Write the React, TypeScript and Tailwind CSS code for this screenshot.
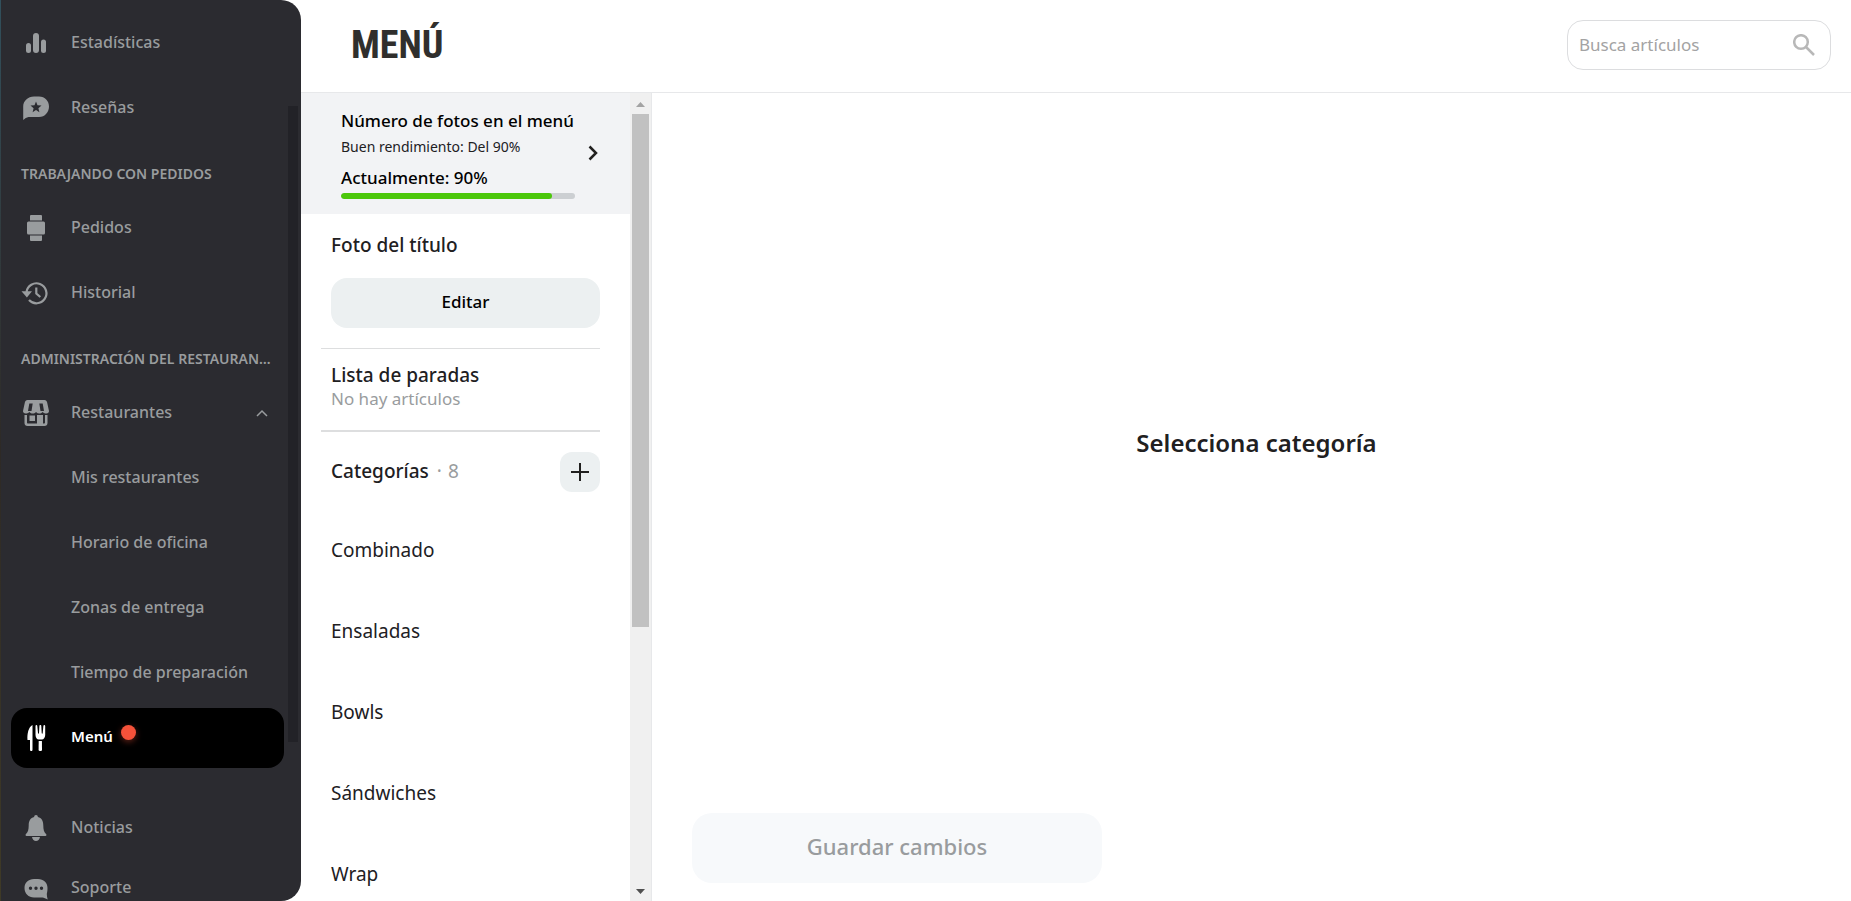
import React from 'react';

type IconProps = { className?: string };

const StatsIcon: React.FC<IconProps> = ({ className }) => (
  <svg viewBox="0 0 26 26" className={className} fill="currentColor" aria-hidden="true">
    <rect x="3" y="13" width="5" height="10" rx="2.5" />
    <rect x="10" y="3" width="6" height="20" rx="3" />
    <rect x="18" y="9.5" width="5" height="13.5" rx="2.5" />
  </svg>
);

const ReviewsIcon: React.FC<IconProps> = ({ className }) => (
  <svg viewBox="0 0 26 26" className={className} fill="currentColor" aria-hidden="true">
    <path
      fillRule="evenodd"
      d="M11 1.500h5c6 0 10 4.500 10 10S22 22 16 22H5.500C3.500 22.300 2 23.500 .200 25V11.500C.200 6 5 1.500 11 1.500zm2 5l-1.500 3.800-4 .300 3.100 2.600-1 4L13 15l3.400 2.200-1-4 3.100-2.600-4-.300z"
    />
  </svg>
);

const OrdersIcon: React.FC<IconProps> = ({ className }) => (
  <svg viewBox="0 0 26 26" className={className} fill="currentColor" aria-hidden="true">
    <path d="M8 0h10a1 1 0 0 1 1 1v4.500H7V1a1 1 0 0 1 1-1z" />
    <rect x="4" y="6.500" width="18" height="13" rx="1.500" />
    <path d="M7 20.500h12V25a1 1 0 0 1-1 1H8a1 1 0 0 1-1-1z" />
  </svg>
);

const HistoryIcon: React.FC<IconProps> = ({ className }) => (
  <svg viewBox="0 0 26 26" className={className} fill="none" stroke="currentColor" aria-hidden="true">
    <path d="M3.500 12A10 10 0 1 1 6 20" strokeWidth="2.200" />
    <path d="M13.300 7.500v6l4 3.500" strokeWidth="2.200" />
    <path d="M-1.500 11.200h10.500L3.900 17.500z" fill="currentColor" stroke="none" />
  </svg>
);

const StoreIcon: React.FC<IconProps> = ({ className }) => (
  <svg viewBox="0 0 26 26" className={className} fill="currentColor" aria-hidden="true">
    <path
      fillRule="evenodd"
      d="M4.500 0h17c1.500 0 2.300 1 2.600 2.300L26 11c0 1.600-1 2.500-2.500 2.500S21 13 19.500 12c-1 1-2 1.500-3.200 1.500S14 13 13 12c-1 1-2 1.500-3.300 1.500S7.500 13 6.500 12C5 13 4 13.500 2.500 13.500S0 12.600 0 11l1.900-8.700C2.200 1 3 0 4.500 0zM6.300 3.500L5 11h3.500l1.200-7.500zm10 0L17.500 11H21l-1.300-7.500z"
    />
    <path
      fillRule="evenodd"
      d="M1.500 15H4v7.500c0 .600.400 1 1 1h9V15h6v8.500h1c.600 0 1-.400 1-1V15h2.500v8c0 1.800-1.200 3-3 3h-17c-1.800 0-3-1.200-3-3z"
    />
    <path d="M6.500 15.500h5.500V21H6.500z" />
  </svg>
);

const MenuIcon: React.FC<IconProps> = ({ className }) => (
  <svg viewBox="0 0 26 26" className={className} fill="currentColor" aria-hidden="true">
    <path d="M9.500 0v24.500c0 1-.500 1.500-1.200 1.500S7 25.500 7 24.500V15H4.500C4 8.500 5.500 2 9.500 0z" />
    <path d="M12.500 1c0-1.200 1.800-1.200 1.800 0l.700 7c.100.900 1 .900 1 0l.400-7c0-1.200 1.900-1.200 1.900 0l.400 7c0 .900 1 .900 1 0l.700-7c0-1.200 1.800-1.200 1.800 0v9c0 2.700-1.700 4.500-3.200 4.500h-3.300c-1.700 0-3.200-1.800-3.200-4.500z" />
    <path d="M15.700 16h3.200l.100 9c0 1.300-3.400 1.300-3.400 0z" />
  </svg>
);

const BellIcon: React.FC<IconProps> = ({ className }) => (
  <svg viewBox="0 0 26 26" className={className} fill="currentColor" aria-hidden="true">
    <path d="M13 0c1.200 0 1.800.800 1.900 2 3.600.900 5.400 3.800 5.400 8.500 0 4 .800 7 2.700 8.500.800.700.500 2-.500 2h-19c-1 0-1.300-1.300-.500-2 1.900-1.500 2.700-4.500 2.700-8.500 0-4.700 1.800-7.600 5.400-8.500.100-1.200.700-2 1.900-2zM9 22h8c-.500 2.500-2 4-4 4s-3.500-1.500-4-4z" />
  </svg>
);

const SupportIcon: React.FC<IconProps> = ({ className }) => (
  <svg viewBox="0 0 26 26" className={className} fill="currentColor" aria-hidden="true">
    <path
      fillRule="evenodd"
      d="M11 4h4c5.500 0 9.500 3.500 9.500 9 0 3-.400 4.500-.700 6 0 1.800.400 3.500.900 5.500-2.200-.800-3.700-2-5.200-2H11c-5.500 0-9.500-4-9.500-9.500S5.500 4 11 4zM7.500 11.500a1.700 1.700 0 1 0 0 3.400 1.700 1.700 0 0 0 0-3.400zm5.500 0a1.700 1.700 0 1 0 0 3.400 1.700 1.700 0 0 0 0-3.400zm5.500 0a1.700 1.700 0 1 0 0 3.400 1.700 1.700 0 0 0 0-3.400z"
    />
  </svg>
);

const categories = ['Combinado', 'Ensaladas', 'Bowls', 'Sándwiches', 'Wrap'];

interface NavItemProps {
  label: string;
  icon?: React.FC<IconProps>;
  active?: boolean;
  children?: React.ReactNode;
}

const NavItem: React.FC<NavItemProps> = ({ label, icon: Icon, active, children }) => (
  <a
    href="#"
    aria-current={active ? 'page' : undefined}
    className={
      active
        ? 'flex h-[60px] shrink-0 items-center rounded-2xl bg-black pl-3 pr-4 text-[15px] font-semibold text-white'
        : 'flex h-[60px] shrink-0 items-center rounded-2xl pl-3 pr-4 text-base font-medium text-[#999c9e]'
    }
  >
    <span className="mr-[22px] size-[26px] shrink-0">
      {Icon && <Icon className="size-[26px] overflow-visible" />}
    </span>
    <span className="pb-[3px]">{label}</span>
    {children}
  </a>
);

const NavHeading: React.FC<{ children: string }> = ({ children }) => (
  <h2 className="h-[50px] shrink-0 truncate pl-[10px] pr-3 pt-[14px] text-sm font-semibold leading-[34px] text-[#999c9e]">
    {children}
  </h2>
);

const Sidebar: React.FC = () => (
  <aside className="flex w-[301px] shrink-0 overflow-hidden rounded-r-[20px] bg-[#2b2b30]">
    <div className="w-px shrink-0 bg-linear-to-b from-[#31505c] via-[#2e2a26] to-[#3f3a26]" />
    <nav className="ml-[10px] flex min-w-0 flex-1 flex-col">
      <div className="flex flex-col gap-[5px] pt-[13px]">
        <NavItem label="Estadísticas" icon={StatsIcon} />
        <NavItem label="Reseñas" icon={ReviewsIcon} />
        <NavHeading>TRABAJANDO CON PEDIDOS</NavHeading>
        <NavItem label="Pedidos" icon={OrdersIcon} />
        <NavItem label="Historial" icon={HistoryIcon} />
        <NavHeading>ADMINISTRACIÓN DEL RESTAURANTE</NavHeading>
        <NavItem label="Restaurantes" icon={StoreIcon}>
          <svg viewBox="0 0 12 8" className="ml-auto h-2 w-3" fill="none" stroke="currentColor" strokeWidth="1.500" aria-hidden="true">
            <path d="M1 7l5-5 5 5" />
          </svg>
        </NavItem>
        <NavItem label="Mis restaurantes" />
        <NavItem label="Horario de oficina" />
        <NavItem label="Zonas de entrega" />
        <NavItem label="Tiempo de preparación" />
        <NavItem label="Menú" icon={MenuIcon} active>
          <span className="mb-3 ml-2 size-[15px] rounded-full bg-[#f5523a] shadow-[0_2px_6px_rgba(245,82,58,0.4)]" />
        </NavItem>
      </div>
      <div className="flex flex-col pt-[30px]">
        <NavItem label="Noticias" icon={BellIcon} />
        <NavItem label="Soporte" icon={SupportIcon} />
      </div>
    </nav>
    <div className="ml-1 w-[13px] shrink-0 pt-[106px]">
      <div className="h-[636px] w-[10px] bg-[#222227]" />
    </div>
  </aside>
);

const PhotoBanner: React.FC = () => (
  <button type="button" className="flex h-[121px] w-full shrink-0 items-center bg-[#f2f3f5] pb-px pl-10 pr-8 text-left text-[#21201f]">
    <span className="flex w-[234px] flex-col">
      <span className="whitespace-nowrap text-[17px] font-medium leading-7 text-black">Número de fotos en el menú</span>
      <span className="text-sm leading-6">Buen rendimiento: Del 90%</span>
      <span className="pt-1 text-[17px] font-medium leading-[30px] text-black">Actualmente: 90%</span>
      <span className="block h-[6px] overflow-hidden rounded-full bg-[#cccfd2]">
        <span className="block h-full rounded-full bg-[#4bc70a]" style={{ width: '90%' }} />
      </span>
    </span>
    <svg viewBox="0 0 10 16" className="ml-auto h-4 w-[10px]" fill="none" stroke="currentColor" strokeWidth="2.500" aria-hidden="true">
      <path d="M1.500 1.500L8 8l-6.500 6.500" />
    </svg>
  </button>
);

const CategoryPanel: React.FC = () => (
  <section className="flex w-[351px] shrink-0 overflow-hidden border-r border-[#e7e8ea] text-[19px] text-[#21201f]">
    <div className="flex flex-1 flex-col">
      <PhotoBanner />
      <div className="flex shrink-0 flex-col pl-5 pr-[30px]">
        <h2 className="pl-[10px] pt-[18px] font-medium leading-[26px]">Foto del título</h2>
        <button type="button" className="ml-[10px] mt-5 h-[50px] rounded-2xl bg-[#ecf0f1] pb-[2px] text-[17px] font-medium text-black">
          Editar
        </button>
        <div className="mt-5 flex h-[82px] flex-col border-t border-[#dddedf] pl-[10px] pt-[13px]">
          <h2 className="font-medium leading-[26px]">Lista de paradas</h2>
          <p className="text-[17px] leading-[22px] text-[#999c9e]">No hay artículos</p>
        </div>
        <div className="flex items-center border-t-2 border-[#dddedf] pl-[10px] pt-5">
          <h2 className="pb-[2px] font-medium">Categorías</h2>
          <span className="ml-2 flex gap-[6px] pb-[2px] text-[#999c9e]">
            <span>·</span>
            <span>8</span>
          </span>
          <button type="button" aria-label="Añadir categoría" className="ml-auto grid size-10 place-items-center rounded-xl bg-[#ecf0f1]">
            <svg viewBox="0 0 18 18" className="size-[18px]" stroke="currentColor" strokeWidth="2" aria-hidden="true">
              <path d="M9 0v18M0 9h18" />
            </svg>
          </button>
        </div>
        <ul className="pl-[10px] pt-[18px]">
          {categories.map((name) => (
            <li key={name} className="flex h-[81px] items-center">
              <a href="#">{name}</a>
            </li>
          ))}
        </ul>
      </div>
    </div>
    <div className="flex w-[21px] shrink-0 flex-col items-center bg-[#f0f0f0] pt-[9px] pb-[7px]">
      <svg viewBox="0 0 9 5" className="h-[5px] w-[9px] shrink-0" fill="#a3a3a3" aria-hidden="true">
        <path d="M0 5l4.500-5L9 5z" />
      </svg>
      <div className="mt-[7px] h-[513px] w-[17px] shrink-0 bg-[#c1c1c1]" />
      <svg viewBox="0 0 9 5" className="mt-auto h-[5px] w-[9px] shrink-0" fill="#505050" aria-hidden="true">
        <path d="M0 0l4.500 5L9 0z" />
      </svg>
    </div>
  </section>
);

const Header: React.FC = () => (
  <header className="flex h-[93px] shrink-0 items-center justify-between border-b border-[#e7e8ea] pl-[50px] pr-5">
    <h1 className="pb-[2px] font-['Liberation_Sans_Narrow','Roboto_Condensed','Liberation_Sans',sans-serif] text-[38px] font-bold leading-[50px] text-[#302f2d]">
      MENÚ
    </h1>
    <div className="mb-[2px] flex h-[50px] w-[264px] items-center rounded-2xl border border-[#dcdddf] pl-[11px] pr-[15px] text-[#b8b8b8]">
      <input
        type="text"
        aria-label="Busca artículos"
        placeholder="Busca artículos"
        className="min-w-0 flex-1 bg-transparent text-[17px] outline-none placeholder:text-[#a3a3a3]"
      />
      <svg viewBox="0 0 22 22" className="size-[22px] shrink-0" fill="none" stroke="currentColor" strokeWidth="2.500" aria-hidden="true">
        <circle cx="8" cy="8" r="6.800" />
        <path d="M13 13l8 8" />
      </svg>
    </div>
  </header>
);

export default function App() {
  return (
    <div className="flex h-screen overflow-hidden bg-white font-['Noto_Sans','Open_Sans',sans-serif]">
      <Sidebar />
      <div className="flex min-w-0 flex-1 flex-col">
        <Header />
        <div className="flex min-h-0 flex-1">
          <CategoryPanel />
          <main className="flex min-w-0 flex-1 flex-col pb-[18px]">
            <div className="flex flex-1 items-center justify-center pb-5 pl-[10px]">
              <h2 className="text-2xl font-semibold text-[#21201f]">Selecciona categoría</h2>
            </div>
            <button type="button" disabled className="ml-10 h-[70px] w-[410px] rounded-[20px] bg-[#f7f9fb] pb-[3px] text-[22px] font-medium text-[#999c9e]">
              Guardar cambios
            </button>
          </main>
        </div>
      </div>
    </div>
  );
}
